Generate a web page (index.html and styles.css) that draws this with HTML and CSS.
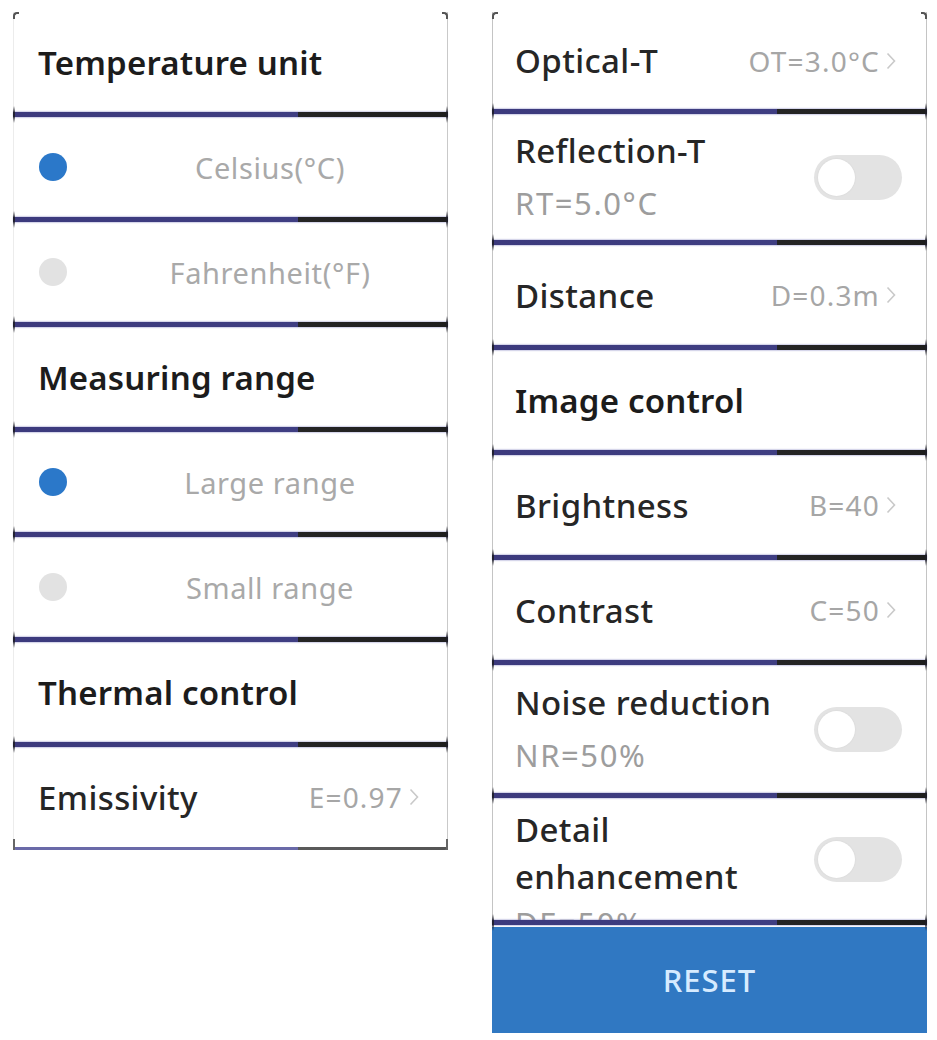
FILE: index.html
```html
<!DOCTYPE html>
<html lang="en">
<head>
<meta charset="utf-8">
<title>Settings</title>
<link rel="stylesheet" href="styles.css">
</head>
<body>
<div class="page">
  <div class="col col-left">
    <div class="row h100"><span class="header">Temperature unit</span></div>
    <div class="sep"></div>
    <div class="row h100 radio-row"><span class="dot on"></span><span class="radio-label">Celsius(°C)</span></div>
    <div class="sep"></div>
    <div class="row h100 radio-row"><span class="dot"></span><span class="radio-label">Fahrenheit(°F)</span></div>
    <div class="sep"></div>
    <div class="row h100"><span class="header">Measuring range</span></div>
    <div class="sep"></div>
    <div class="row h100 radio-row"><span class="dot on"></span><span class="radio-label">Large range</span></div>
    <div class="sep"></div>
    <div class="row h100 radio-row"><span class="dot"></span><span class="radio-label">Small range</span></div>
    <div class="sep"></div>
    <div class="row h100"><span class="header">Thermal control</span></div>
    <div class="sep"></div>
    <div class="row h100 left-pad"><span class="title">Emissivity</span><span class="value">E=0.97<svg class="chev" viewBox="0 0 10 18"><path d="M1.5 1.5 L8.5 9 L1.5 16.5"/></svg></span></div>
    <div class="sep sep-last"></div>
  </div>
  <div class="col col-right">
    <div class="row h97"><span class="title">Optical-T</span><span class="value">OT=3.0°C<svg class="chev" viewBox="0 0 10 18"><path d="M1.5 1.5 L8.5 9 L1.5 16.5"/></svg></span></div>
    <div class="sep"></div>
    <div class="row h126"><div class="stack"><span class="title">Reflection-T</span><span class="sub">RT=5.0°C</span></div><span class="toggle"></span></div>
    <div class="sep"></div>
    <div class="row h100"><span class="title">Distance</span><span class="value">D=0.3m<svg class="chev" viewBox="0 0 10 18"><path d="M1.5 1.5 L8.5 9 L1.5 16.5"/></svg></span></div>
    <div class="sep"></div>
    <div class="row h100"><span class="header">Image control</span></div>
    <div class="sep"></div>
    <div class="row h100"><span class="title">Brightness</span><span class="value">B=40<svg class="chev" viewBox="0 0 10 18"><path d="M1.5 1.5 L8.5 9 L1.5 16.5"/></svg></span></div>
    <div class="sep"></div>
    <div class="row h100"><span class="title">Contrast</span><span class="value">C=50<svg class="chev" viewBox="0 0 10 18"><path d="M1.5 1.5 L8.5 9 L1.5 16.5"/></svg></span></div>
    <div class="sep"></div>
    <div class="row h128"><div class="stack"><span class="title">Noise reduction</span><span class="sub">NR=50%</span></div><span class="toggle"></span></div>
    <div class="sep"></div>
    <div class="row h122 clip"><div class="stack top"><span class="title">Detail<br>enhancement</span><span class="sub">DE=50%</span></div><span class="toggle"></span></div>
    <div class="sep"></div>
    <button class="reset">RESET</button>
  </div>
</div>
</body>
</html>
```
FILE: styles.css
```css
* { box-sizing: border-box; }
html, body { margin: 0; padding: 0; background: #ffffff; }
body { font-family: "Noto Sans", "DejaVu Sans", sans-serif; color: #222; }

.page {
  display: flex;
  gap: 44px;
  padding: 12px 0 0 13px;
}

.col {
  width: 435px;
  display: flex;
  flex-direction: column;
  position: relative;
}
.col::before, .col::after {
  content: "";
  position: absolute;
  top: 0;
  width: 4px;
  height: 5px;
  border-top: 2px solid #555;
}
.col::before { left: 0; border-left: 2px solid #555; border-top-left-radius: 4px; }
.col::after { right: 0; border-right: 2px solid #555; border-top-right-radius: 4px; }

.col-left .row { border-left: 1px solid #ececec; border-right: 1px solid #c9c9c9; }
.col-right .row { border-left: 1px solid #c4c4c4; border-right: 1px solid #c4c4c4; }

.row {
  display: flex;
  align-items: center;
  justify-content: space-between;
  padding: 0 30px 0 22px;
  background: #fff;
}
.col-left .row { padding-left: 24px; padding-right: 28px; }
.h97 { height: 97px; }
.h100 { height: 100px; }
.h122 { height: 122px; }
.h126 { height: 126px; }
.h128 { height: 128px; }

.clip { overflow: hidden; align-items: flex-start; padding-top: 8px; }
.clip .toggle { align-self: center; margin-top: -8px; }
.clip .sub { margin-top: 0; }

.header {
  font-size: 33px;
  font-weight: 600;
  color: #1c1c1c;
  letter-spacing: 0.2px;
}
.title {
  font-size: 33px;
  font-weight: 500;
  color: #262626;
  line-height: 47px;
  letter-spacing: 0.4px;
}
.sub {
  font-size: 31px;
  color: #9d9d9d;
  line-height: 47px;
  margin-top: 6px;
  letter-spacing: 1.6px;
}
.stack { display: flex; flex-direction: column; }

.value {
  display: flex;
  align-items: center;
  gap: 6px;
  font-size: 28px;
  color: #a6a6a6;
  letter-spacing: 1.2px;
}
.chev {
  width: 10px;
  height: 18px;
  fill: none;
  stroke: #c9c9c9;
  stroke-width: 1.6;
}

.radio-row { justify-content: flex-start; }
.dot {
  width: 28px;
  height: 28px;
  border-radius: 50%;
  background: #e2e2e2;
  flex: none;
  margin-left: 1px;
}
.dot.on { background: #2b78c9; }
.radio-label {
  flex: 1;
  text-align: center;
  font-size: 29px;
  color: #a9a9a9;
  padding-left: 54px;
  letter-spacing: 0.6px;
}

.toggle {
  width: 88px;
  height: 45px;
  border-radius: 23px;
  background: #e3e3e3;
  position: relative;
  flex: none;
  margin-right: -6px;
}
.toggle::before {
  content: "";
  position: absolute;
  left: 4px;
  top: 4px;
  width: 37px;
  height: 37px;
  border-radius: 50%;
  background: #fff;
  box-shadow: 0 0 2px rgba(0,0,0,0.08);
}

.sep {
  height: 5px;
  flex: none;
  position: relative;
  background: linear-gradient(to right, #3c3a7d 0, #3f3e82 65.5%, #252525 65.5%, #1e1e1e 100%);
  box-shadow: 0 -1px 1px rgba(90,90,170,0.25), 0 1px 1px rgba(90,90,170,0.25);
}
.sep::before, .sep::after {
  content: "";
  position: absolute;
  top: -6px;
  width: 2px;
  height: 17px;
  background: linear-gradient(to bottom, rgba(30,30,40,0), rgba(30,30,40,0.9) 40%, rgba(30,30,40,0.9) 60%, rgba(30,30,40,0));
}
.sep::before { left: 0; }
.sep::after { right: 0; }
.sep-last {
  height: 3px;
  border-radius: 0 0 3px 3px;
  background: linear-gradient(to right, #6a6aa8 0, #6a6aa8 65.5%, #5a5a5a 65.5%, #555 100%);
  box-shadow: none;
}
.sep-last::before, .sep-last::after { top: -8px; height: 11px; background: #666; }

.reset {
  margin-top: 2px;
  height: 106px;
  width: 100%;
  border: none;
  background: #3078c2;
  color: #d6ebff;
  font-family: "Noto Sans", "DejaVu Sans", sans-serif;
  font-size: 31px;
  font-weight: 500;
  letter-spacing: 1px;
  padding: 0;
}
```
